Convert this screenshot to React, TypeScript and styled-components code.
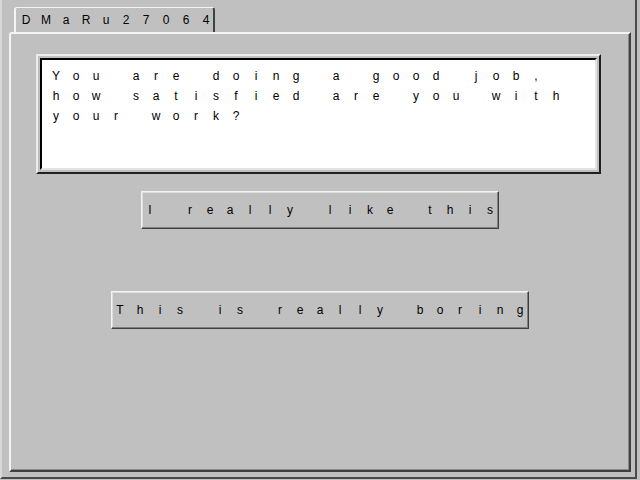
import React from "react";
import styled, { createGlobalStyle } from "styled-components";

const Global = createGlobalStyle`
  html, body { margin: 0; padding: 0; background: #c0c0c0; }
  body {
    font-family: "Liberation Sans", Arial, sans-serif;
    font-size: 12px;
    color: #000;
    -webkit-font-smoothing: grayscale;
  }
`;

const Screen = styled.div`
  width: 640px;
  height: 480px;
  box-sizing: border-box;
  background: #c0c0c0;
  overflow: hidden;
`;

const Frame = styled.div`
  width: 637px;
  height: 479px;
  box-sizing: border-box;
  border-left: 2px solid #d8d8d8;
  border-right: 2px solid #4a4a4a;
  border-bottom: 2px solid #4a4a4a;
  padding: 7px 4px 5px 7px;
  display: flex;
  flex-direction: column;
`;

const Tab = styled.div`
  margin-left: 5px;
  width: 201px;
  height: 25px;
  box-sizing: border-box;
  border-top: 1px solid #f4f4f4;
  border-left: 2px solid #f4f4f4;
  border-right: 2px solid #404040;
  border-radius: 3px 3px 0 0;
  display: flex;
  align-items: center;
  white-space: nowrap;
  overflow: visible;
`;

const Panel = styled.div`
  flex: 1;
  box-sizing: border-box;
  border-top: 2px solid #f4f4f4;
  border-left: 2px solid #f4f4f4;
  border-right: 2px solid #404040;
  border-bottom: 2px solid #404040;
  border-radius: 3px 0 0 0;
  box-shadow: inset -1px -1px 0 #8a8a8a;
  display: flex;
  flex-direction: column;
  align-items: center;
  padding-top: 20px;
`;

const TextBoxOuter = styled.div`
  width: 565px;
  height: 120px;
  box-sizing: border-box;
  border-top: 2px solid #ececec;
  border-left: 2px solid #ececec;
  border-right: 2px solid #202020;
  border-bottom: 2px solid #202020;
  padding: 2px;
  background: #c0c0c0;
  margin-left: -3px;
`;

const TextBoxInner = styled.div`
  height: 100%;
  box-sizing: border-box;
  background: #ffffff;
  border-top: 2px solid #000;
  border-left: 2px solid #000;
  border-right: 2px solid #e4e4e4;
  border-bottom: 2px solid #e4e4e4;
  padding: 6px 0 0 4px;
`;

const Line = styled.div`
  display: flex;
  height: 20px;
  align-items: center;
  white-space: nowrap;
`;

const Cell = styled.span`
  display: inline-block;
  width: 20px;
  flex: 0 0 20px;
  text-align: center;
`;

const Button = styled.div<{ $cells: number; $gap: number }>`
  margin-top: ${(p) => p.$gap}px;
  width: ${(p) => p.$cells * 20 - 2}px;
  height: 38px;
  box-sizing: border-box;
  background: #c0c0c0;
  border-top: 1px solid #f4f4f4;
  border-left: 1px solid #f4f4f4;
  border-right: 1px solid #404040;
  border-bottom: 1px solid #404040;
  box-shadow: inset -1px -1px 0 #808080, inset 1px 1px 0 #dedede;
  display: flex;
  align-items: center;
  justify-content: center;
  white-space: nowrap;
`;

const Spaced: React.FC<{ text: string }> = ({ text }) => (
  <>
    {Array.from(text).map((c, i) => (
      <Cell key={i}>{c === " " ? "\u00a0" : c}</Cell>
    ))}
  </>
);

const lines = ["You are doing a good job,", "how satisfied are you with", "your work?"];

export default function App() {
  return (
    <Screen>
      <Global />
      <Frame>
        <Tab>
          <Spaced text="DMaRu27064" />
        </Tab>
        <Panel>
          <TextBoxOuter>
            <TextBoxInner>
              {lines.map((l) => (
                <Line key={l}>
                  <Spaced text={l} />
                </Line>
              ))}
            </TextBoxInner>
          </TextBoxOuter>
          <Button $cells={18} $gap={17}>
            <Spaced text="I really like this" />
          </Button>
          <Button $cells={21} $gap={62}>
            <Spaced text="This is really boring" />
          </Button>
        </Panel>
      </Frame>
    </Screen>
  );
}
